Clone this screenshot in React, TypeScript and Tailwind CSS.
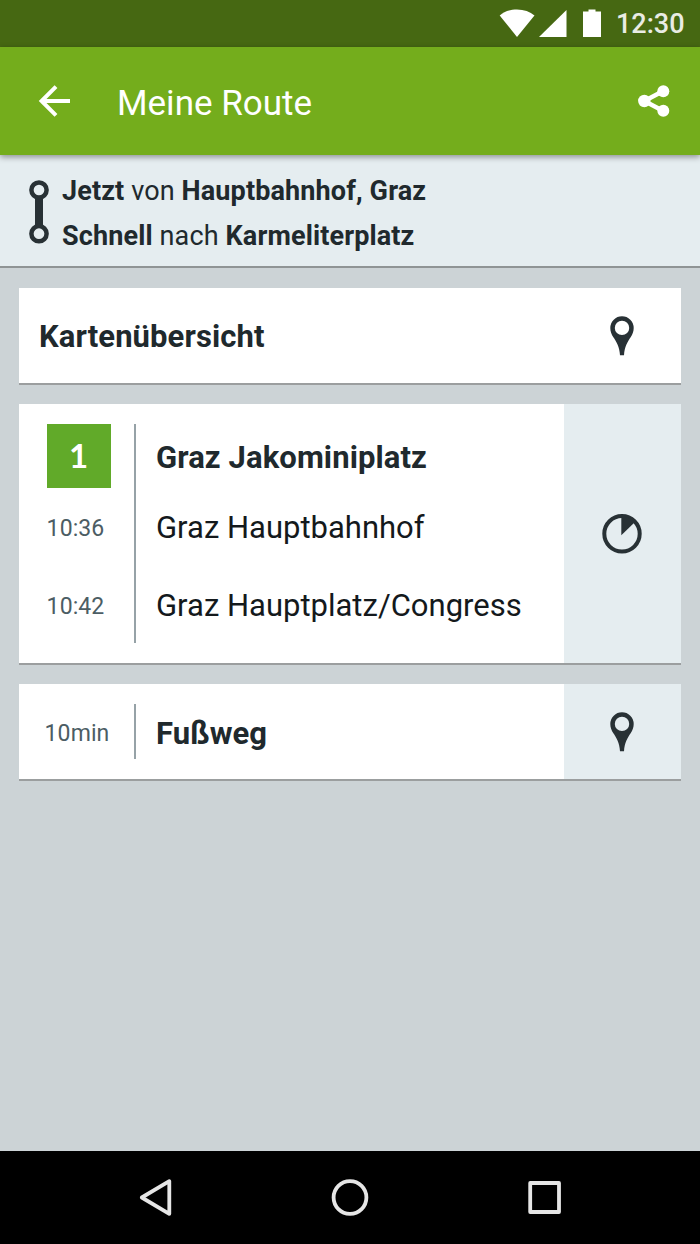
import type { ReactNode } from "react";

function App() {
  return (
    <div className="flex h-[1244px] w-[700px] flex-col overflow-hidden bg-[#ccd3d6] font-['Roboto',sans-serif] text-[#20292d]">
      <StatusBar />
      <AppBar title="Meine Route" />

      {/* ROUTE SUMMARY */}
      <section className="flex h-[113px] shrink-0 items-center border-b-2 border-[#8f9495] bg-[#e5edf0] pl-7 pt-0.5">
        <RouteIcon />
        <div className="ml-3 pt-1 text-[27px] leading-[45px] tracking-[0.13px]">
          <p className="whitespace-nowrap">
            <b>Jetzt</b> von <b>Hauptbahnhof, Graz</b>
          </p>
          <p className="whitespace-nowrap">
            <b>Schnell</b> nach <b>Karmeliterplatz</b>
          </p>
        </div>
      </section>

      {/* CARDS */}
      <main className="flex grow flex-col gap-[19px] px-[19px] pt-5">
        <Card className="h-[97px]">
          <h2 className="grow self-center pl-5 pt-1 text-[31px] font-bold tracking-[0.1px]">
            Kartenübersicht
          </h2>
          <div className="flex w-[117px] items-center justify-center pr-px">
            <PinIcon />
          </div>
        </Card>

        <Card className="h-[261px]">
          <div className="flex w-[115px] flex-col items-center pl-1 pt-5">
            <span className="mb-0.5 flex size-16 shrink-0 items-center justify-center bg-[#61aa29] font-['Lato',sans-serif] text-[33px] font-bold text-white">
              1
            </span>
            <Time className="h-[78px] shrink-0 pr-1.5">10:36</Time>
            <Time className="h-[78px] shrink-0 pr-1.5">10:42</Time>
          </div>
          <Divider />
          <div className="flex grow flex-col pl-5 pt-[21px] text-[31px] text-[#14191c]">
            <h2 className="flex h-[66px] items-center font-bold tracking-[0.1px] text-[#20292d]">
              Graz Jakominiplatz
            </h2>
            <p className="-mt-0.5 flex h-[78px] items-center">
              Graz Hauptbahnhof
            </p>
            <p className="flex h-[78px] items-center">
              Graz Hauptplatz/Congress
            </p>
          </div>
          <Action>
            <ClockIcon />
          </Action>
        </Card>

        <Card className="h-[97px]">
          <div className="flex w-[115px] items-center justify-center pl-px pt-1.5">
            <Time>10min</Time>
          </div>
          <Divider />
          <h2 className="grow self-center pl-5 pt-1.5 text-[31px] font-bold">
            Fußweg
          </h2>
          <Action>
            <PinIcon />
          </Action>
        </Card>
      </main>

      <NavigationBar />
    </div>
  );
}

/* BARS */

function StatusBar() {
  return (
    <div className="flex h-[47px] shrink-0 items-center bg-[#466812] text-white">
      <svg className="ml-[499px] h-[47px] w-[104px]" viewBox="0 0 104 47" fill="currentColor">
        <path d="M0.7 15.5C5 11.6 11 9.5 18 9.5S31 11.6 35.5 15.5L18 37Z" />
        <path d="M67.5 10V37H40Z" />
        <path d="M84 11.5h5.5V9.5h7v2H102V37H84Z" />
      </svg>
      <span className="ml-[13px] pt-0.5 text-[27px] font-medium text-[#e9ece4]">12:30</span>
    </div>
  );
}

function AppBar({ title }: { title: string }) {
  return (
    <header className="relative flex h-[108px] shrink-0 items-center bg-[#74ad1c] text-white shadow-[0_2px_6px_rgba(0,0,0,0.4)]">
      <svg className="ml-[38px] size-8" viewBox="0 0 32 32" fill="none" stroke="currentColor" strokeWidth="4">
        <path d="M32 16H4M18 1.7L3.6 16L18 30.3" />
      </svg>
      <h1 className="ml-[47px] grow pt-1.5 text-[35px]">{title}</h1>
      <svg className="mr-[30px] h-8 w-[33px]" viewBox="0 0 33 32" fill="currentColor">
        <path d="M26.3 6L7.3 16L26.3 26" fill="none" stroke="currentColor" strokeWidth="4.4" />
        <circle cx="26.3" cy="6.3" r="6" />
        <circle cx="7.3" cy="16" r="6.2" />
        <circle cx="26.3" cy="25.7" r="6" />
      </svg>
    </header>
  );
}

function NavigationBar() {
  return (
    <nav className="flex h-[93px] shrink-0 items-center bg-black">
      <svg
        className="h-[93px] w-full"
        viewBox="0 0 700 93"
        fill="none"
        stroke="#e6e6e6"
        strokeWidth="3.8"
        strokeLinejoin="round"
      >
        <path d="M169.3 30.2V62.8L141.8 46.5Z" />
        <circle cx="350" cy="46.5" r="16.4" />
        <rect x="530.2" y="32" width="28.8" height="29" />
      </svg>
    </nav>
  );
}

/* COMPONENTS */

function Card({ className, children }: { className: string; children: ReactNode }) {
  return (
    <section className={`flex border-b-2 border-[#9b9e9f] bg-white ${className}`}>
      {children}
    </section>
  );
}

function Action({ children }: { children: ReactNode }) {
  return (
    <div className="flex w-[117px] shrink-0 items-center justify-center bg-[#e5edf0] pr-px">
      {children}
    </div>
  );
}

function Divider() {
  return <div className="my-5 w-0.5 shrink-0 bg-[#96a2a7]" />;
}

function Time({ className = "", children }: { className?: string; children: ReactNode }) {
  return (
    <span className={`flex items-center text-[23px] tracking-[0.1px] text-[#4c5d64] ${className}`}>
      {children}
    </span>
  );
}

/* ICONS */

function RouteIcon() {
  return (
    <svg className="h-[66px] w-[22px]" viewBox="0 0 22 66" fill="none" stroke="#283135">
      <path d="M11 19V47" strokeWidth="8" />
      <circle cx="11" cy="11" r="7.6" strokeWidth="4.5" fill="#e5edf0" />
      <circle cx="11" cy="54.7" r="7.6" strokeWidth="4.5" fill="#e5edf0" />
    </svg>
  );
}

function PinIcon() {
  return (
    <svg className="h-10 w-6" viewBox="0 0 24 40" fill="#283135" fillRule="evenodd">
      <path d="M12 .3A11.7 11.7 0 0 0 .3 12C.3 15.5 1.5 18.3 3.2 21C6.5 26 9.5 30.5 10 39.3H14C14.5 30.5 17.5 26 20.8 21C22.5 18.3 23.7 15.5 23.7 12A11.7 11.7 0 0 0 12 .3ZM12 4.7A7.2 7.2 0 1 1 12 19.1A7.2 7.2 0 1 1 12 4.7Z" />
    </svg>
  );
}

function ClockIcon() {
  return (
    <svg className="size-10" viewBox="0 0 40 40">
      <circle cx="20" cy="19.8" r="17.7" fill="none" stroke="#283135" strokeWidth="4" />
      <path d="M19.3 3V21.3L33 8Q28 3 19.3 3Z" fill="#283135" />
    </svg>
  );
}

export default App;
